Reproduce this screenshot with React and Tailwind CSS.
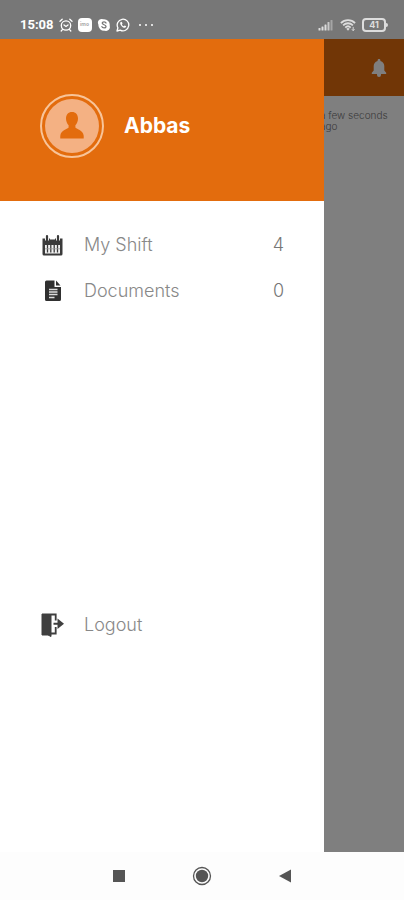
import React from 'react';

const AlarmIcon = () => (
  <svg viewBox="0 0 14 14" className="w-3.5 h-3.5" fill="none" stroke="currentColor" strokeWidth="1.3" strokeLinecap="round">
    <circle cx="7" cy="7.5" r="4.7" />
    <path d="M5 7l2 1.500L9 7M1 3.2 3.2 1.2M13 3.2 10.8 1.2M3.4 11.6l-1.2 1.4M10.6 11.6l1.2 1.4" />
  </svg>
);

const SkypeIcon = () => (
  <svg viewBox="0 0 14 14" className="w-3.5 h-3.5">
    <path d="M4.4 1a3.6 3.6 0 0 0-3 5.4A5.8 5.8 0 0 0 8 12.7 3.7 3.7 0 0 0 12.7 8 5.8 5.8 0 0 0 6.3 1.3 3.6 3.6 0 0 0 4.4 1Z" fill="#fff" />
    <path d="M9 5c-.4-1.5-3.7-1.5-3.8.1C5.200 7 9 6.5 9 8.6 8.9 10.4 5.3 10.3 4.9 8.7" fill="none" stroke="#777" strokeWidth="1.3" strokeLinecap="round" />
  </svg>
);

const WhatsappIcon = () => (
  <svg viewBox="0 0 14 14" className="w-3.5 h-3.5">
    <path d="M1 13l.9-3.2A5.8 5.8 0 1 1 4.2 12.1Z" fill="none" stroke="currentColor" strokeWidth="1.3" strokeLinejoin="round" />
    <path d="M4.900 3.800c-1.400 1-.7 2.900.8 4.400s3.300 2.200 4.300.9c.3-.5.200-.8-.2-1l-1.200-.5-.8.7c-.8-.3-1.600-1.100-1.900-1.900l.6-.8-.5-1.300c-.2-.5-.7-.7-1.100-.5Z" fill="currentColor" />
  </svg>
);

const SignalIcon = () => (
  <svg viewBox="0 0 15 12" className="w-4 h-3" fill="currentColor">
    <rect x="0" y="9" width="2" height="2.5" rx=".5" />
    <rect x="3" y="7.5" width="2" height="4" rx=".5" />
    <rect x="6" y="5.5" width="2" height="6" rx=".5" />
    <rect x="9" y="3" width="2" height="8.5" rx=".5" opacity=".8" />
    <rect x="12" y="1" width="2" height="10.5" rx=".5" opacity=".45" />
  </svg>
);

const WifiIcon = () => (
  <svg viewBox="0 0 17 14" className="w-4 h-3.5" fill="none" stroke="currentColor" strokeWidth="1.9">
    <path d="M1 5c4-4.3 11-4.3 15 0M3.3 7.4c3-3 7.4-3 10.4 0M5.6 9.7c1.8-1.7 4-1.7 5.8 0" />
    <path d="M8.500 13 6.700 10.900c1-.8 2.600-.8 3.600 0Z" fill="currentColor" stroke="none" />
    <path d="M14 9v4M12.600 11.500l1.400 1.500 1.400-1.500" strokeWidth="1" />
  </svg>
);

const UserIcon = () => (
  <svg viewBox="0 0 24 28" className="w-6 h-7" fill="#e36c0d">
    <path d="M12 0c3.700 0 6 2.700 6 6.500 0 2.700-1.100 5.200-2.600 6.700v2.300c.5 1.500 7.900 2.500 8.300 8.300.1 1.500 0 2.700 0 2.700H.3s-.1-1.200 0-2.700c.4-5.800 7.800-6.800 8.300-8.300v-2.300C7.100 11.700 6 9.200 6 6.500 6 2.700 8.300 0 12 0Z" />
  </svg>
);

const BellIcon = () => (
  <svg viewBox="0 0 16 20" className="w-4 h-5" fill="currentColor">
    <path d="M8 1c.9 0 1.400.6 1.400 1.400v.5c2.600.7 3.900 2.700 3.900 5.100v4.500l1.900 2.300V16H.8v-1.200l1.900-2.300V8c0-2.400 1.300-4.400 3.900-5.100v-.5C6.600 1.600 7.100 1 8 1ZM6 16h4v1a2 2 0 0 1-4 0Z" />
  </svg>
);

const CalendarIcon = () => (
  <svg viewBox="0 0 24 24" className="w-6 h-6">
    <path d="M2.500 5.500h20V21a1.500 1.500 0 0 1-1.500 1.500H4A1.500 1.500 0 0 1 2.500 21Z" fill="#3a3a3a" />
    <path d="M5 12h15v8.500H5Z" fill="#f2f2f2" />
    <path d="M7.500 12v7.500M10.800 12v7.500M14.200 12v7.500M17.500 12v7.500" stroke="#3a3a3a" strokeWidth="1.300" />
    <path d="M5 15.800h15" stroke="#999" strokeWidth=".8" />
    <path d="M7 2.500v5M18 2.500v5" stroke="#fff" strokeWidth="4" />
    <path d="M7 3v4.500M18 3v4.500" stroke="#3a3a3a" strokeWidth="2.200" strokeLinecap="round" />
    <path d="M10 5.500h5" stroke="#fff" strokeWidth="2" />
  </svg>
);

const DocumentIcon = () => (
  <svg viewBox="0 0 24 24" className="w-6 h-6">
    <path d="M6.500 1.500h8V8H21v12.500a1.500 1.500 0 0 1-1.500 1.500h-13A1.500 1.500 0 0 1 5 20.500V3a1.500 1.500 0 0 1 1.500-1.500Z" fill="#303030" />
    <path d="M16 1.500 20.500 6.500H16Z" fill="#303030" />
    <path d="M9 10.500h8.500M9 13h8.500M9 15.500h8.500M9 18.500h5.500" stroke="#ddd" strokeWidth="1.300" />
  </svg>
);

const LogoutIcon = () => (
  <svg viewBox="0 0 24 24" className="w-6 h-6">
    <path d="M2 1h9v22.500L8 22H2Z" fill="#3f3f3f" stroke="#3f3f3f" strokeLinejoin="round" />
    <path d="M11 1.500h4.700v6M15.700 14v6.500H11" fill="none" stroke="#3f3f3f" strokeWidth="1.800" />
    <path d="M13.500 9.800h4V5.500L24 10.800l-6.500 5.300v-4.300h-4Z" fill="#3f3f3f" />
  </svg>
);

const StatusBar = () => (
  <div className="h-[39px] shrink-0 bg-[#777777] text-white flex items-center justify-between pl-5 pr-4 pt-2.5">
    <div className="flex items-center gap-[5px]">
      <span className="font-['Roboto',sans-serif] text-[13px] leading-4 font-bold">15:08</span>
      <AlarmIcon />
      <span className="w-3.5 h-3.5 rounded-sm bg-white text-[#aaaaaa] text-[5px] leading-none font-bold flex items-center justify-center">imo</span>
      <SkypeIcon />
      <WhatsappIcon />
      <span className="flex gap-1 ml-1">
        <i className="w-0.5 h-0.5 rounded-full bg-white" />
        <i className="w-0.5 h-0.5 rounded-full bg-white" />
        <i className="w-0.5 h-0.5 rounded-full bg-white" />
      </span>
    </div>
    <div className="flex items-center gap-1.5 text-[#dddddd]">
      <SignalIcon />
      <WifiIcon />
      <span className="flex items-center">
        <span className="w-6 h-3.5 border-2 border-[#dddddd] rounded text-[9px] leading-none font-bold flex items-center justify-center">41</span>
        <i className="w-0.5 h-1 rounded-r-sm bg-[#dddddd]" />
      </span>
    </div>
  </div>
);

const menu = [
  { label: 'My Shift', count: 4, Icon: CalendarIcon },
  { label: 'Documents', count: 0, Icon: DocumentIcon },
];

const MenuItem = ({ label, count, Icon }) => (
  <button className="w-full h-[46px] flex items-center text-left text-lg leading-6 font-light text-[#888888]">
    <Icon />
    <span className="ml-5 flex-1">{label}</span>
    {count !== undefined && <span className="text-[#777777]">{count}</span>}
  </button>
);

const Drawer = () => (
  <aside className="absolute inset-y-0 left-0 w-[80.2%] bg-white flex flex-col">
    <div className="h-[162px] shrink-0 bg-[#e36c0d] flex items-center gap-5 px-10 pt-3">
      <div className="w-16 h-16 rounded-full border-2 border-[#f8c499] p-[3px]">
        <div className="w-full h-full rounded-full bg-[#f4b183] flex items-center justify-center">
          <UserIcon />
        </div>
      </div>
      <h1 className="text-[21px] leading-7 font-bold text-white">Abbas</h1>
    </div>
    <nav className="flex-1 flex flex-col justify-between px-10 pt-[21px] pb-[204px]">
      <div>
        {menu.map((item) => (
          <MenuItem key={item.label} {...item} />
        ))}
      </div>
      <MenuItem label="Logout" Icon={LogoutIcon} />
    </nav>
  </aside>
);

const App = () => (
  <div className="min-h-screen flex flex-col bg-white font-['Inter',sans-serif]">
    <StatusBar />

    <div className="relative flex-1 flex flex-col">
      {/* Screen under the drawer */}
      <main className="flex-1">
        <header className="h-[57px] bg-[#e36c0d] flex items-center justify-end px-[17px]">
          <button aria-label="Notifications" className="text-white">
            <BellIcon />
          </button>
        </header>
        <p className="w-[72px] ml-auto mr-3 mt-3.5 text-[10px] leading-[11px] font-light text-[#777777]">a few seconds ago</p>
      </main>
      <div className="absolute inset-0 bg-black/50" />
      <Drawer />
    </div>

    {/* System navigation */}
    <footer className="h-12 shrink-0 bg-[#fdfdfd] text-[#555555] flex items-center justify-center gap-[65px]">
      <button aria-label="Recent apps">
        <svg viewBox="0 0 16 16" className="w-4 h-4" fill="currentColor">
          <rect x="2" y="2" width="12" height="12" />
        </svg>
      </button>
      <button aria-label="Home">
        <svg viewBox="0 0 20 20" className="w-5 h-5">
          <circle cx="10" cy="10" r="8.5" fill="none" stroke="currentColor" strokeWidth="1.3" />
          <circle cx="10" cy="10" r="6.2" fill="currentColor" />
        </svg>
      </button>
      <button aria-label="Back">
        <svg viewBox="0 0 16 16" className="w-4 h-4" fill="currentColor">
          <path d="M14 1.500v13L2 8Z" />
        </svg>
      </button>
    </footer>
  </div>
);

export default App;
